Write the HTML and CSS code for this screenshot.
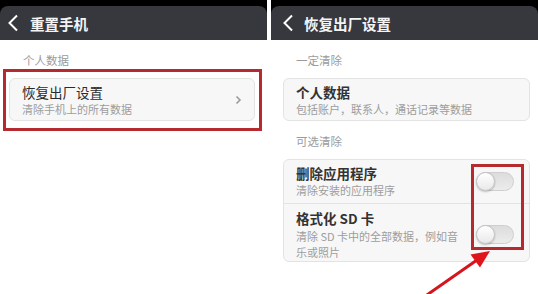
FILE: index.html
```html
<!doctype html>
<html lang="zh">
<head>
  <meta charset="utf-8"/>
  <title>恢复出厂设置</title>
  <link rel="stylesheet" href="styles.css">
</head>
<body>
<div class="page">
  <div class="screen screen-left">
    <div class="top">
      <div class="header">
        <svg class="back" width="12" height="18" viewBox="0 0 12 18"><path d="M10 1.5 L2.5 9 L10 16.5" fill="none" stroke="#fff" stroke-width="2"/></svg>
        <span class="title">重置手机</span>
      </div>
    </div>
    <div class="content">
      <div class="label">个人数据</div>
      <div class="mark">
        <div class="card">
          <div class="row">
            <div class="text">
              <div class="name">恢复出厂设置</div>
              <div class="desc">清除手机上的所有数据</div>
            </div>
            <svg class="more" width="7" height="10" viewBox="0 0 7 10"><path d="M1.5 1.5 L5 5 L1.5 8.5" fill="none" stroke="#9a9a9a" stroke-width="1.6"/></svg>
          </div>
        </div>
      </div>
    </div>
  </div>

  <div class="screen screen-right">
    <div class="top">
      <div class="header">
        <svg class="back" width="12" height="18" viewBox="0 0 12 18"><path d="M10 1.5 L2.5 9 L10 16.5" fill="none" stroke="#fff" stroke-width="2"/></svg>
        <span class="title">恢复出厂设置</span>
      </div>
    </div>
    <div class="content">
      <div class="label">一定清除</div>
      <div class="card">
        <div class="row">
          <div class="text">
            <div class="name">个人数据</div>
            <div class="desc">包括账户，联系人，通话记录等数据</div>
          </div>
        </div>
      </div>
      <div class="label label-gap">可选清除</div>
      <div class="card card-options">
        <div class="row row-first">
          <div class="text narrow">
            <div class="name">删除应用程序</div>
            <div class="desc">清除安装的应用程序</div>
          </div>
          <div class="toggle"><span class="knob"></span></div>
        </div>
        <div class="row row-second">
          <div class="text narrow">
            <div class="name">格式化 SD 卡</div>
            <div class="desc">清除 SD 卡中的全部数据，例如音乐或照片</div>
          </div>
          <div class="toggle"><span class="knob"></span></div>
        </div>
        <div class="toggle-mark"></div>
      </div>
    </div>
  </div>

  <svg class="arrow" width="538" height="294" viewBox="0 0 538 294">
    <line x1="424" y1="297" x2="477" y2="260" stroke="#d4151b" stroke-width="3"/>
    <polygon points="490,251 480,267.5 470.5,254.5" fill="#e0141b"/>
  </svg>
</div>
</body>
</html>
```

FILE: styles.css
```css
html, body {
  margin: 0;
  background: #fff;
}
.page {
  position: relative;
  display: flex;
  gap: 4px;
  width: 538px;
  height: 294px;
  overflow: hidden;
  font-family: "Noto Sans CJK SC", "Noto Sans", sans-serif;
}
.screen {
  width: 267px;
  height: 294px;
  background: #fff;
}
.top {
  background: #000;
  padding-top: 6px;
}
.header {
  display: flex;
  align-items: center;
  height: 34px;
  background: #36383e;
  border-radius: 8px 8px 0 0;
  color: #fff;
}
.screen-left .header {
  padding-left: 7px;
}
.screen-right .header {
  padding-left: 11px;
}
.back {
  flex: none;
}
.title {
  font-size: 14.5px;
  font-weight: bold;
  color: #f4f4f4;
}
.screen-left .title {
  margin-left: 11px;
}
.screen-right .title {
  margin-left: 10px;
}
.content {
  padding-top: 12px;
}
.screen-left .content {
  padding-left: 3px;
  padding-right: 5px;
}
.screen-right .content {
  padding-left: 12px;
  padding-right: 8px;
}
.label {
  height: 16px;
  line-height: 16px;
  font-size: 11.5px;
  color: #9b9b9b;
  margin-bottom: 10px;
}
.screen-left .label {
  padding-left: 20px;
  margin-bottom: 1px;
}
.screen-right .label {
  padding-left: 13px;
}
.label-gap {
  margin-top: 12px;
}
.mark {
  border: 3px solid #b52a2e;
  padding: 6px 4px 7px 3px;
}
.card {
  position: relative;
  background: #f7f7f7;
  border: 1px solid #e3e3e3;
  border-radius: 6px;
}
.row {
  display: flex;
  align-items: center;
  justify-content: space-between;
  padding: 4px 12px 3px 12px;
}
.row-first {
  padding: 4px 15px 5px 12px;
}
.row-second {
  border-top: 1px solid #e3e3e3;
  padding: 5px 15px 1px 12px;
}
.text {
  flex: 1;
}
.narrow {
  flex: none;
  width: 172px;
}
.name {
  font-size: 13.5px;
  line-height: 18px;
  font-weight: bold;
  color: #333;
}
.screen-left .name {
  font-weight: normal;
  color: #2a2a2a;
}
.desc {
  font-size: 11px;
  line-height: 16px;
  color: #9d9d9d;
}
.row-second .desc {
  margin-top: 1px;
}
.toggle {
  position: relative;
  width: 38px;
  height: 19px;
  box-sizing: border-box;
  border: 1px solid #cfcfcf;
  border-radius: 10px;
  background: linear-gradient(#dcdcdc, #ececec);
}
.knob {
  position: absolute;
  left: -1px;
  top: -1px;
  width: 19px;
  height: 19px;
  box-sizing: border-box;
  border: 1px solid #c4c4c4;
  border-radius: 50%;
  background: linear-gradient(#ffffff, #e9e9e9);
  box-shadow: 0 1px 2px rgba(0, 0, 0, 0.25);
}
.toggle-mark {
  position: absolute;
  left: 187px;
  top: 4px;
  width: 53px;
  height: 86px;
  box-sizing: border-box;
  border: 3px solid #b52a2e;
}
.arrow {
  position: absolute;
  left: 0;
  top: 0;
  pointer-events: none;
}
```
